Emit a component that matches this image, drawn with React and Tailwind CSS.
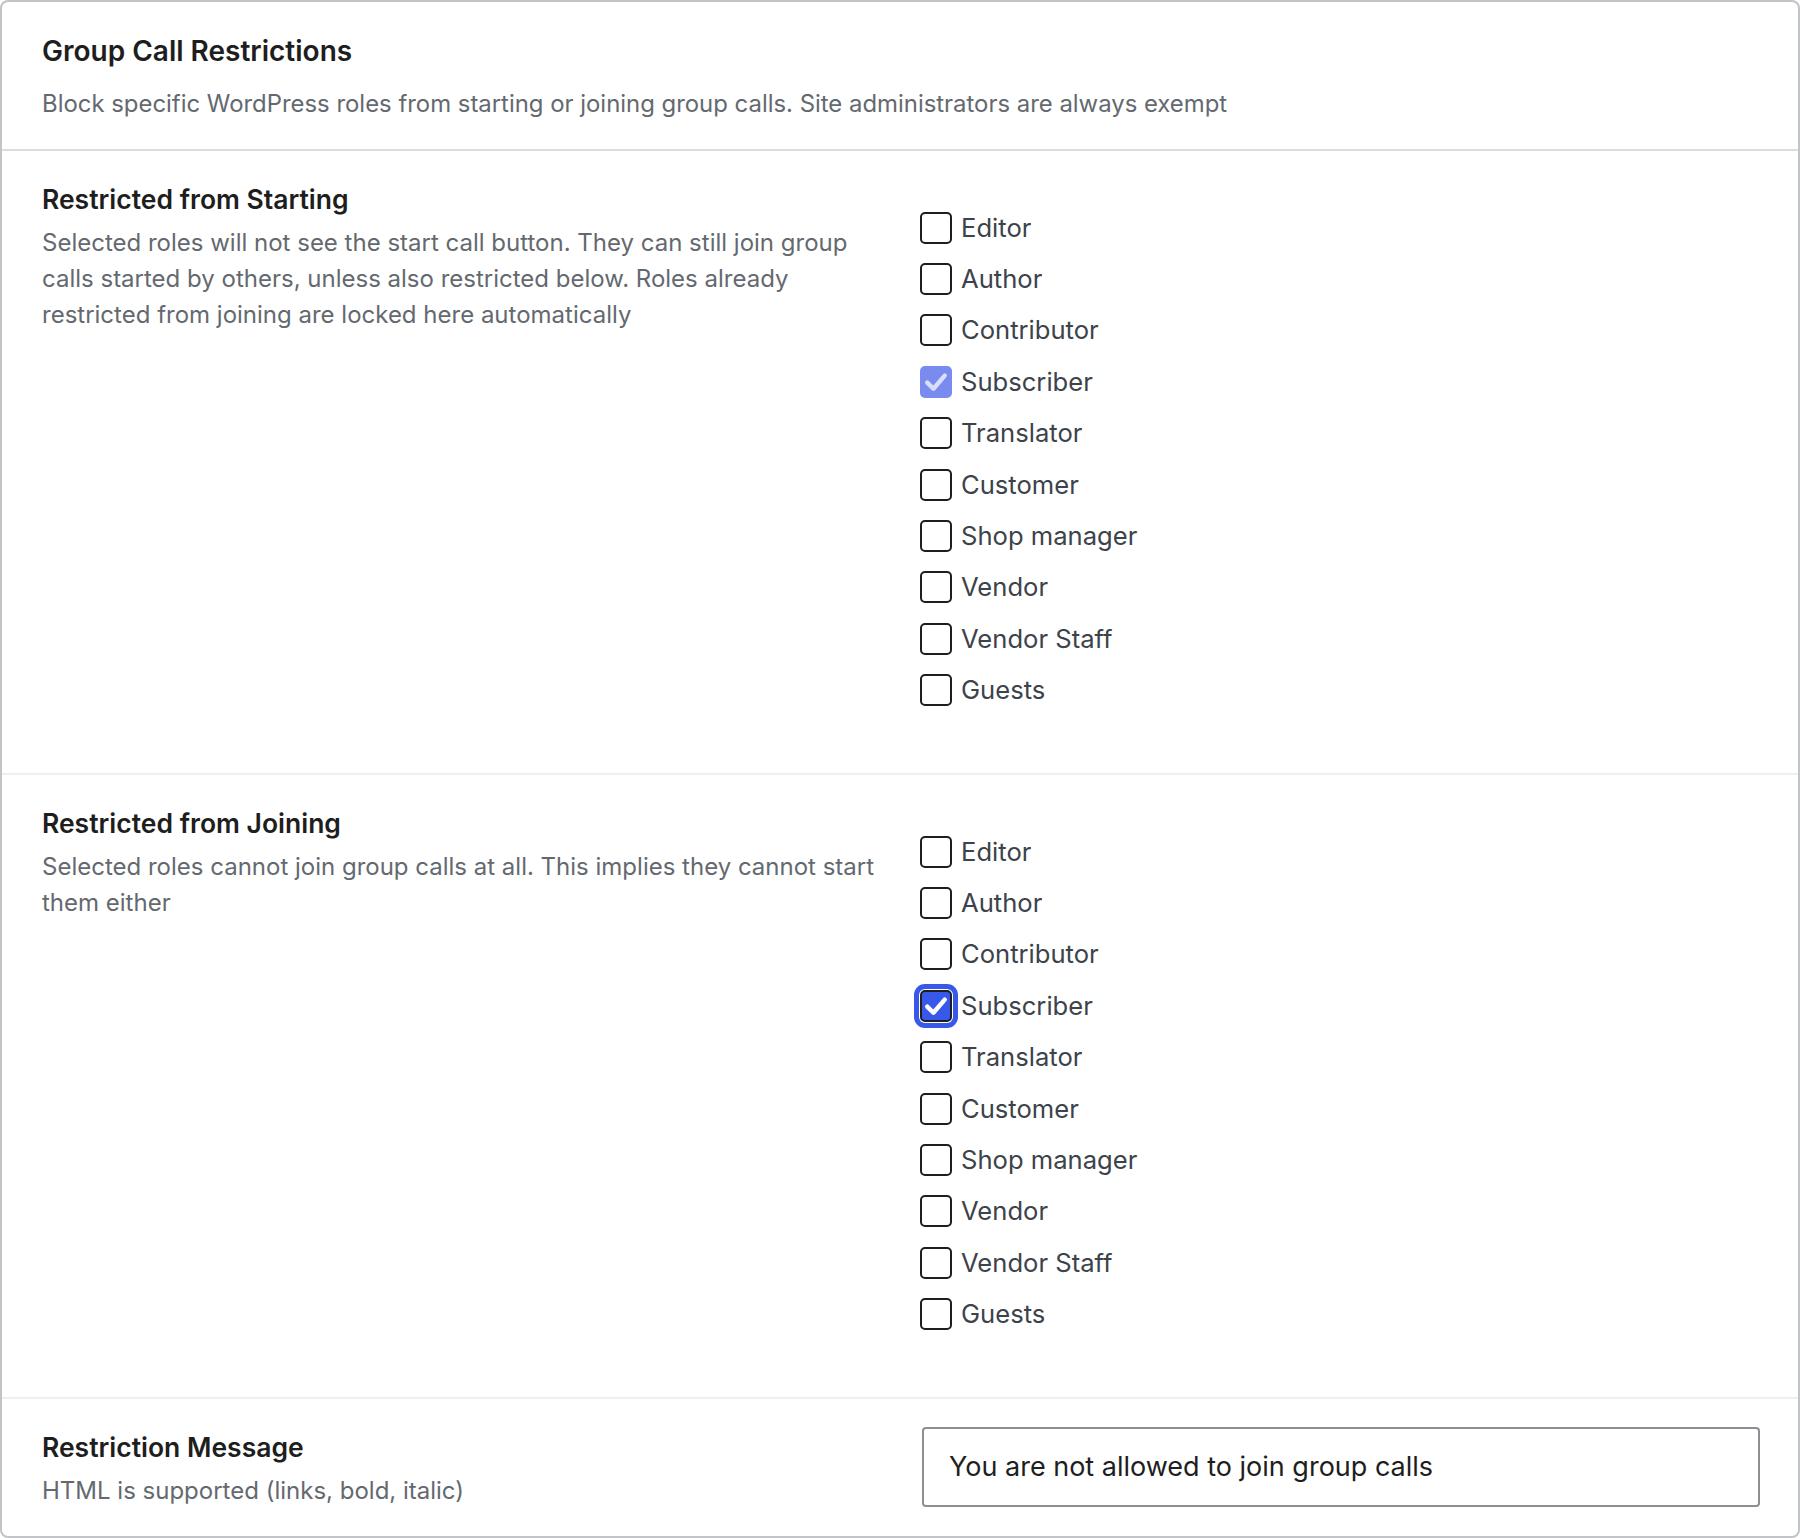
import React from "react";

const ROLES = [
  "Editor",
  "Author",
  "Contributor",
  "Subscriber",
  "Translator",
  "Customer",
  "Shop manager",
  "Vendor",
  "Vendor Staff",
  "Guests",
];

function Check({ color }) {
  return (
    <svg viewBox="0 0 24 24" className="w-[28px] h-[28px]" fill="none">
      <path d="M4.5 12.5 L9.8 17.8 L19.5 6.5" stroke={color} strokeWidth="3.8" strokeLinecap="round" strokeLinejoin="round" />
    </svg>
  );
}

function Box({ state }) {
  if (state === "disabled") {
    return (
      <span className="flex items-center justify-center w-[32px] h-[32px] rounded-[5px] bg-[#7a8bf0] shrink-0">
        <Check color="#d9defb" />
      </span>
    );
  }
  if (state === "focused") {
    return (
      <span className="flex items-center justify-center w-[32px] h-[32px] rounded-[5px] bg-[#3858e9] border-2 border-[#1e1e1e] shrink-0 shadow-[0_0_0_1px_#ffffff,0_0_0_6px_#3858e9]">
        <Check color="#ffffff" />
      </span>
    );
  }
  return <span className="block w-[32px] h-[32px] rounded-[5px] border-2 border-[#1e1e1e] bg-white shrink-0" />;
}

function RoleList({ checkedState }) {
  return (
    <div className="flex flex-col mt-[19px]">
      {ROLES.map((r) => (
        <div key={r} className="flex items-center h-[51.4px] gap-[9px]">
          <Box state={r === "Subscriber" ? checkedState : "none"} />
          <span className="text-[25.6px] leading-[32px] text-[#3c434a]">{r}</span>
        </div>
      ))}
    </div>
  );
}

function Section({ title, desc, children, last }) {
  return (
    <div className={"grid grid-cols-2 gap-10 px-10 pt-[32px] " + (last ? "pb-[29px]" : "pb-[57px] border-b-2 border-[#f0f0f1]")}>
      <div>
        <div className="text-[26.5px] leading-[32px] font-semibold text-[#1e1e1e]">{title}</div>
        <div className="mt-[10px] text-[24px] leading-[36px] text-[#646970]">{desc}</div>
      </div>
      <div>{children}</div>
    </div>
  );
}

export default function App() {
  return (
    <div className="w-[1800px] h-[1538px] bg-white" style={{ fontFamily: "Inter, 'Noto Sans', sans-serif" }}>
      <div className="h-full border-2 border-[#c3c4c7] rounded-[8px] overflow-hidden bg-white">
        <div className="px-10 pt-[32px] pb-[27px] border-b-2 border-[#dcdcde]">
          <div className="text-[28px] leading-[34px] font-semibold text-[#1e1e1e]">Group Call Restrictions</div>
          <div className="mt-[18px] text-[23.9px] leading-[36px] text-[#646970]">
            Block specific WordPress roles from starting or joining group calls. Site administrators are always exempt
          </div>
        </div>
        <Section
          title="Restricted from Starting"
          desc="Selected roles will not see the start call button. They can still join group calls started by others, unless also restricted below. Roles already restricted from joining are locked here automatically"
        >
          <RoleList checkedState="disabled" />
        </Section>
        <Section
          title="Restricted from Joining"
          desc="Selected roles cannot join group calls at all. This implies they cannot start them either"
        >
          <RoleList checkedState="focused" />
        </Section>
        <Section title="Restriction Message" desc="HTML is supported (links, bold, italic)" last>
          <div className="flex items-center h-[80px] px-[25px] border-2 border-[#8c8f94] rounded-[4px] text-[27px] text-[#1e1e1e] -mt-[4px] ml-[2px] -mr-[2px]">
            You are not allowed to join group calls
          </div>
        </Section>
      </div>
    </div>
  );
}
